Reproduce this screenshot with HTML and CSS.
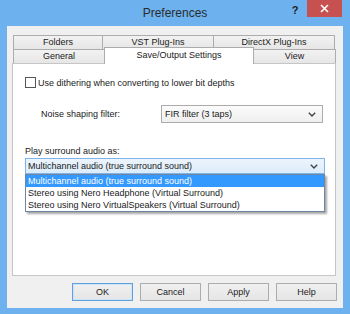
FILE: index.html
```html
<!DOCTYPE html>
<html lang="en">
<head>
    <meta charset="UTF-8">
    <title>Preferences</title>
    <link rel="stylesheet" href="styles.css">
</head>
<body>
    <div class="window">
        <!-- Barra de título -->
        <div class="titlebar">
            <span></span>
            <span class="title">Preferences</span>
            <div class="caption-btns">
                <span class="help-btn">?</span>
                <span class="close-btn">
                    <svg width="9" height="9" viewBox="0 0 9 9"><path d="M1 1L8 8M8 1L1 8" stroke="#fff" stroke-width="1.6"/></svg>
                </span>
            </div>
        </div>
        <div class="client">
            <!-- Abas -->
            <div class="tab-row">
                <div class="tab tab-folders">Folders</div>
                <div class="tab tab-vst">VST Plug-Ins</div>
                <div class="tab tab-directx">DirectX Plug-Ins</div>
            </div>
            <div class="tab-row front">
                <div class="tab tab-general">General</div>
                <div class="tab tab-save active">Save/Output Settings</div>
                <div class="tab tab-view">View</div>
            </div>
            <div class="panel">
                <div class="check-row">
                    <span class="checkbox"></span>
                    <span>Use dithering when converting to lower bit depths</span>
                </div>
                <div class="field-row">
                    <span class="field-label">Noise shaping filter:</span>
                    <div class="combo combo-filter">
                        <span>FIR filter (3 taps)</span>
                        <svg class="chevron" width="8" height="5" viewBox="0 0 8 5"><path d="M0.8 0.8L4 4L7.2 0.8" fill="none" stroke="#444" stroke-width="1.4"/></svg>
                    </div>
                </div>
                <div class="surround-label">Play surround audio as:</div>
                <div class="combo-wrap">
                    <div class="combo combo-open">
                        <span>Multichannel audio (true surround sound)</span>
                        <svg class="chevron" width="8" height="5" viewBox="0 0 8 5"><path d="M0.8 0.8L4 4L7.2 0.8" fill="none" stroke="#444" stroke-width="1.4"/></svg>
                    </div>
                    <ul class="dropdown">
                        <li class="selected">Multichannel audio (true surround sound)</li>
                        <li>Stereo using Nero Headphone (Virtual Surround)</li>
                        <li>Stereo using Nero VirtualSpeakers (Virtual Surround)</li>
                    </ul>
                </div>
            </div>
            <!-- Botões -->
            <div class="buttons">
                <button class="btn default">OK</button>
                <button class="btn">Cancel</button>
                <button class="btn">Apply</button>
                <button class="btn">Help</button>
            </div>
        </div>
    </div>
</body>
</html>
```

FILE: styles.css
```css
* {
    margin: 0;
    padding: 0;
    box-sizing: border-box;
    font-family: 'Liberation Sans', Arial, sans-serif;
}
body {
    background-color: #6db2ee;
    width: 350px;
    height: 314px;
    overflow: hidden;
}
.window {
    width: 350px;
    height: 314px;
    background-color: #6db2ee; /* moldura azul */
    padding: 0 7px 6px 7px;
}
.titlebar {
    height: 26px;
    display: grid;
    grid-template-columns: 1fr auto 1fr;
    align-items: center;
}
.title {
    font-size: 12px;
    color: #2b2b2b;
}
.caption-btns {
    display: flex;
    justify-content: flex-end;
    align-self: start;
    height: 18px;
}
.help-btn {
    width: 24px;
    text-align: center;
    font-size: 11px;
    font-weight: bold;
    color: #222;
    line-height: 20px;
}
.close-btn {
    width: 35px;
    height: 17px;
    margin-right: 1px;
    background-color: #c75050;
    display: flex;
    align-items: center;
    justify-content: center;
}
.client {
    height: 282px;
    background-color: #f0f0f0;
    padding: 9px 7px 0 5px;
    font-size: 9px;
    color: #1a1a1a;
}
/* Abas */
.tab-row {
    display: flex;
    align-items: flex-end;
    height: 14px;
    margin-left: 1px;
}
.tab {
    height: 14px;
    line-height: 13px;
    text-align: center;
    border: 1px solid #acacac;
    border-bottom: none;
    background: linear-gradient(#f2f2f2, #e6e6e6);
    white-space: nowrap;
}
.tab + .tab {
    margin-left: -1px;
}
.tab-folders { width: 90px; }
.tab-vst { width: 112px; }
.tab-directx { width: 122px; }
.tab-general { width: 92px; }
.tab-save { width: 150px; }
.tab-view { width: 83px; }
.tab.active {
    height: 17px;
    line-height: 14px;
    margin-bottom: -1px;
    background: #fff;
    z-index: 1;
}
.panel {
    height: 213px;
    background-color: #fff;
    border: 1px solid #c6c6c6;
    padding: 13px 12px 0 12px;
}
.check-row {
    display: flex;
    align-items: center;
    height: 11px;
    gap: 2px;
}
.checkbox {
    width: 11px;
    height: 11px;
    border: 1px solid #555;
    background: #fff;
}
.field-row {
    display: flex;
    align-items: center;
    margin-top: 17px;
    padding-left: 16px;
}
.field-label {
    width: 121px;
}
.combo {
    display: flex;
    align-items: center;
    justify-content: space-between;
    border: 1px solid #acacac;
    background: linear-gradient(#fbfbfb, #efefef);
    padding: 0 6px 0 3px;
    white-space: nowrap;
}
.combo-filter {
    width: 163px;
    height: 18px;
}
.surround-label {
    margin-top: 22px;
    line-height: 12px;
}
.combo-wrap {
    position: relative;
    width: 300px;
    margin-top: 1px;
}
.combo-open {
    height: 16px;
    border-color: #7eb4ea;
    background: linear-gradient(#ecf4fc, #dcecfc);
    padding-left: 2px;
}
/* Lista aberta do combo */
.dropdown {
    position: absolute;
    top: 100%;
    left: 0;
    right: 0;
    list-style: none;
    background: #fff;
    border: 1px solid #6f86a3;
    box-shadow: 2px 2px 2px rgba(0, 0, 0, 0.35);
    z-index: 5;
}
.dropdown li {
    height: 12px;
    line-height: 12px;
    padding-left: 2px;
    white-space: nowrap;
}
.dropdown li.selected {
    background-color: #3399ff;
    color: #fff;
}
.buttons {
    display: flex;
    justify-content: flex-end;
    gap: 7px;
    margin-top: 7px;
    margin-right: -1px;
}
.btn {
    width: 61px;
    height: 18px;
    font-size: 9px;
    color: #1a1a1a;
    border: 1px solid #acacac;
    background: linear-gradient(#f0f0f0, #e5e5e5);
}
.btn.default {
    border-color: #5fa1e0;
    box-shadow: inset 0 0 0 1px #cfe3f7;
}
```
